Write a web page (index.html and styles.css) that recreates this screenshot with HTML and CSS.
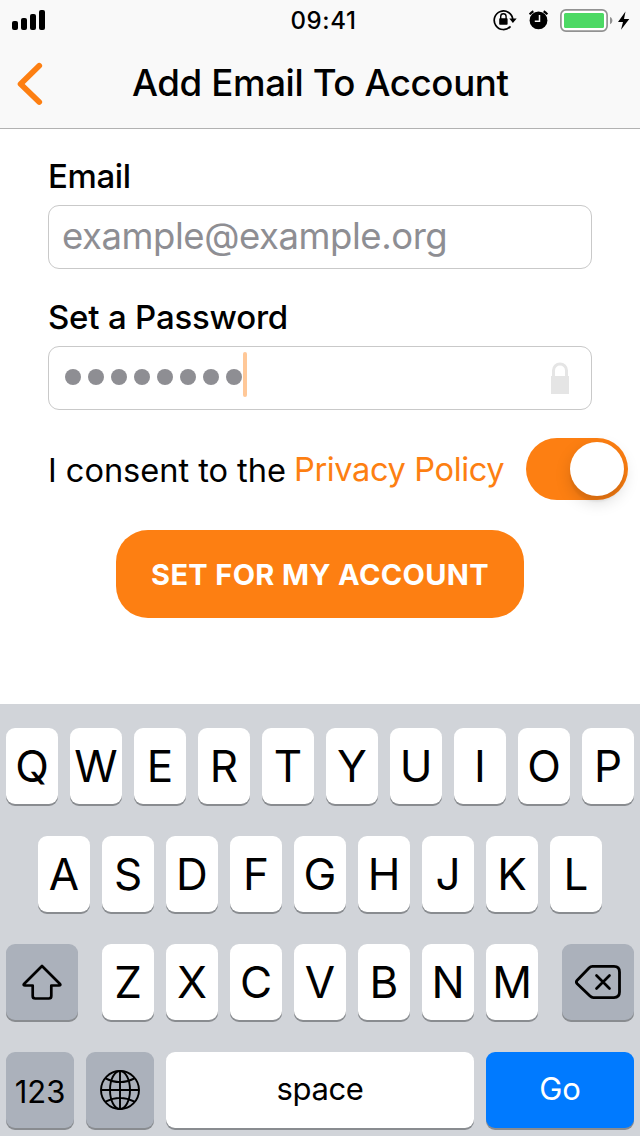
FILE: index.html
```html
<!DOCTYPE html>
<html lang="en">
<head>
<meta charset="utf-8">
<title>Add Email To Account</title>
<link rel="stylesheet" href="styles.css">
</head>
<body>
<div class="screen">
  <header class="header">
    <div class="status">
      <svg class="signal" width="34" height="20" viewBox="0 0 34 20"><rect x="0" y="11" width="6" height="9" rx="2"/><rect x="9" y="8" width="6" height="12" rx="2"/><rect x="18" y="4" width="6" height="16" rx="2"/><rect x="27" y="0" width="6" height="20" rx="2"/></svg>
      <span class="time">09:41</span>
      <div class="status-icons">
        <svg class="rotation" width="24" height="22" viewBox="0 0 24 22"><path d="M17.500 17.400A9.300 9.300 0 1 1 19.800 10.500" fill="none" stroke="#000" stroke-width="1.700"/><path d="M16.300 9.600h7.400L19.900 13.900z"/><rect x="6.200" y="9.200" width="8.400" height="6.600" rx=".8"/><path d="M7.700 10V7.400a2.700 2.700 0 0 1 5.400 0V10" fill="none" stroke="#000" stroke-width="1.400"/></svg>
        <svg class="alarm" width="20" height="20" viewBox="0 0 20 20"><circle cx="9.500" cy="10.400" r="8.900"/><path d="M.7 4.400A11 11 0 0 1 4.400 1.200M18.300 4.400A11 11 0 0 0 14.600 1.200" fill="none" stroke="#000" stroke-width="2.200"/><path d="M10.500 5v6.300H5.800" fill="none" stroke="#f9f9f9" stroke-width="1.500"/></svg>
        <svg class="battery" width="53" height="24" viewBox="0 0 53 24"><rect x=".9" y=".9" width="46.200" height="21.200" rx="5" fill="#fff" stroke="#929292" stroke-width="1.700"/><rect x="4" y="4" width="40" height="15" rx="1.500" fill="#4cd964"/><path d="M50 8c3.200 1.200 3.200 6 0 7.200z" fill="#929292"/></svg>
        <svg class="bolt" width="12" height="20" viewBox="0 0 12 20"><path d="M7.500.5 0 11h5L3 18.700 11.300 8H6z"/></svg>
      </div>
    </div>
    <div class="nav">
      <svg class="back" width="26" height="44" viewBox="0 0 26 44"><path d="M22.200 3.800 3.600 22l18.600 18" fill="none" stroke="#fd7f12" stroke-width="5.800" stroke-linecap="round" stroke-linejoin="round"/></svg>
      <h1 class="title">Add Email To Account</h1>
    </div>
  </header>

  <main class="form">
    <label class="label label-email">Email</label>
    <div class="field"><span class="placeholder">example@example.org</span></div>
    <label class="label label-password">Set a Password</label>
    <div class="field password">
      <span class="dots"><i></i><i></i><i></i><i></i><i></i><i></i><i></i><i></i></span>
      <span class="caret"></span>
      <svg class="lock" width="20" height="33" viewBox="0 0 20 33"><path d="M1 14h18v18H1z" fill="#e5e5e5"/><path d="M3.500 15V8.500a6.500 6.500 0 0 1 13 0V15" fill="none" stroke="#e5e5e5" stroke-width="3"/></svg>
    </div>
    <div class="consent">
      <span class="consent-text">I consent to the</span>
      <a class="policy">Privacy Policy</a>
      <span class="switch"><span class="knob"></span></span>
    </div>
    <button class="submit"><span class="submit-text">SET FOR MY ACCOUNT</span></button>
  </main>

  <section class="keyboard">
    <div class="row"><span class="key">Q</span><span class="key">W</span><span class="key">E</span><span class="key">R</span><span class="key">T</span><span class="key">Y</span><span class="key">U</span><span class="key">I</span><span class="key">O</span><span class="key">P</span></div>
    <div class="row"><span class="key">A</span><span class="key">S</span><span class="key">D</span><span class="key">F</span><span class="key">G</span><span class="key">H</span><span class="key">J</span><span class="key">K</span><span class="key">L</span></div>
    <div class="row">
      <span class="key dark shift"><svg width="40" height="36" viewBox="0 0 40 36"><path d="M20 2 2 20q-1 1.500 1 1.500h7.700V32q0 2.500 2.500 2.500h13.600q2.500 0 2.500-2.500V21.500H37q2 0 1-1.500z" fill="none" stroke="#000" stroke-width="2.700" stroke-linejoin="round"/></svg></span>
      <span class="key">Z</span><span class="key">X</span><span class="key">C</span><span class="key">V</span><span class="key">B</span><span class="key">N</span><span class="key">M</span>
      <span class="key dark delete"><svg width="46" height="36" viewBox="0 0 46 36"><path d="M17.500 2.400H39q5.500 0 5.500 5.500v20.200q0 5.500-5.500 5.500H18.500q-2 0-3.500-1.500L2.200 19.700q-1.600-1.700 0-3.400L14 4q1.500-1.600 3.500-1.600z" fill="none" stroke="#000" stroke-width="2.800" stroke-linejoin="round"/><path d="m21.500 11.500 13 13m0-13-13 13" stroke="#000" stroke-width="2.700" stroke-linecap="round"/></svg></span>
    </div>
    <div class="row">
      <span class="key dark numbers">123</span>
      <span class="key dark globe"><svg width="42" height="42" viewBox="0 0 42 42" fill="none" stroke="#000" stroke-width="1.900"><circle cx="21" cy="21" r="19"/><ellipse cx="21" cy="21" rx="10" ry="19"/><path d="M21 2v38M2 21h38M6.500 9.300Q21 17 35.500 9.300M6.500 32.700Q21 25 35.500 32.700"/></svg></span>
      <span class="key space">space</span>
      <span class="key go">Go</span>
    </div>
  </section>
</div>
</body>
</html>
```
FILE: styles.css
```css
* { box-sizing: border-box; }
body { margin: 0; font-family: Inter, "Liberation Sans", sans-serif; color: #000; background: #fff; }
svg { display: block; flex: none; }
.screen { width: 640px; height: 1136px; display: flex; flex-direction: column; overflow: hidden; }

.header { height: 129px; background: #f9f9f9; border-bottom: 1px solid #b2b2b2; }
.status { height: 40px; display: grid; grid-template-columns: 1fr auto 1fr; padding: 0 8px 0 12px; }
.signal { margin-top: 10px; }
.time { font-size: 24px; font-weight: 500; line-height: 41px; letter-spacing: 0.600px; margin-left: 3px; white-space: nowrap; }
.status-icons { display: flex; justify-content: flex-end; align-items: flex-start; }
.rotation { margin: 9px 12px 0 0; }
.alarm { margin: 10px 11px 0 0; }
.battery { margin: 9px 5px 0 0; }
.bolt { margin: 11px 2px 0 0; }
.nav { height: 88px; display: flex; align-items: flex-start; padding-left: 17px; }
.back { margin-top: 22px; }
.title { margin: 20px 0 0 89px; font-size: 36.700px; font-weight: 500; line-height: 46px; letter-spacing: -0.400px; white-space: nowrap; }

.form { height: 575px; padding: 26px 12px 0 48px; }
.label { display: block; font-size: 33px; font-weight: 500; line-height: 42px; white-space: nowrap; }
.label-email { letter-spacing: -0.400px; }
.label-password { margin-top: 27px; letter-spacing: -0.200px; }
.field { width: 544px; height: 64px; margin-top: 8px; border: 1px solid #c9c9c9; border-radius: 11px; display: flex; align-items: center; padding: 0 21px 0 14px; }
.placeholder { color: #8e8e93; font-size: 36.500px; line-height: 60px; margin: -2px 0 0 -1px; letter-spacing: -0.450px; white-space: nowrap; }
.dots { display: flex; gap: 6.900px; margin-left: 2.400px; margin-top: -2px; }
.dots i { width: 16.100px; height: 16.100px; border-radius: 50%; background: #8e8e93; }
.caret { width: 4px; height: 45px; border-radius: 2px; background: #ffc898; margin: -8px 0 0 0.800px; }
.lock { margin-left: auto; margin-top: 0; }
.consent { display: flex; align-items: flex-start; height: 62px; margin-top: 28px; line-height: 62px; font-size: 32.600px; white-space: nowrap; }
.consent-text { width: 246px; margin-top: 1px; letter-spacing: -0.040px; }
.policy { color: #fd7f12; letter-spacing: -0.380px; }
.switch { margin-left: auto; width: 102px; height: 62px; border-radius: 31px; background: #fd7f12; padding: 4px; display: flex; justify-content: flex-end; }
.knob { width: 54px; height: 54px; border-radius: 50%; background: #fff; box-shadow: 0 6px 16px rgba(0,0,0,.15), 0 6px 2px rgba(0,0,0,.05); }
.submit { display: flex; align-items: center; justify-content: center; width: 408px; height: 88px; margin: 30px 0 0 68px; padding: 2px 0 0; border: 0; border-radius: 32px; background: #fd7f12; color: #fff; font: 700 29px/86px Inter, "Liberation Sans", sans-serif; letter-spacing: 0.350px; white-space: nowrap; }

.keyboard { flex: 1; background: #d1d4d9; padding: 24px 6px 0; display: flex; flex-direction: column; gap: 30px; }
.row { height: 78px; display: flex; justify-content: center; gap: 12px; }
.key { width: 52px; height: 76px; border-radius: 9px; background: #fff; box-shadow: 0 2px 0 #898c90; display: flex; align-items: center; justify-content: center; font-size: 44px; font-weight: 400; line-height: 76px; }
.dark { background: #abb1bb; }
.shift { width: 72px; margin-right: 12px; }
.delete { width: 72px; margin-left: 12px; }
.numbers { width: 68px; font-size: 31px; padding-top: 4px; }
.globe { width: 68px; }
.space { width: 308px; font-size: 31px; letter-spacing: -0.400px; line-height: 74px; padding-bottom: 2px; }
.go { width: 148px; font-size: 31px; background: #007aff; color: #fff; line-height: 74px; padding-bottom: 2px; }
```
